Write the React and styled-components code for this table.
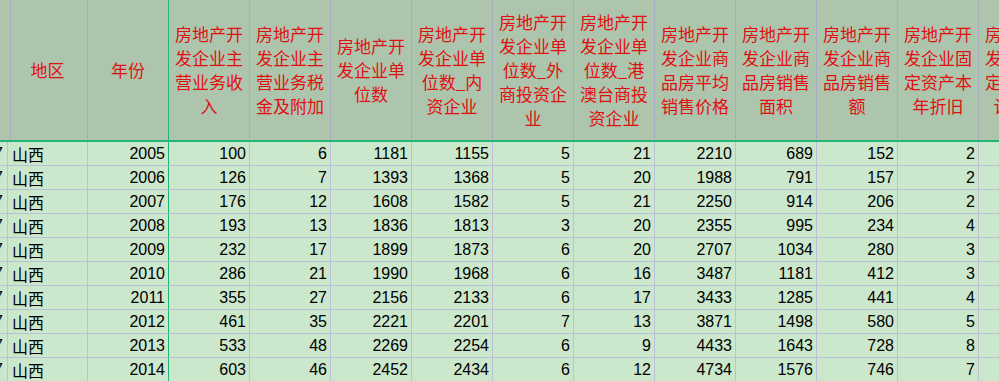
import React from 'react';
import styled, { createGlobalStyle } from 'styled-components';

const Global = createGlobalStyle`
  html, body {
    margin: 0;
    padding: 0;
    overflow: hidden;
    background: #cce8cc;
  }
`;

const COLS = '8px 80px 81px repeat(10, 81px) 81px';

const Sheet = styled.div`
  width: 1060px;
  font-family: "Liberation Sans", "Noto Sans CJK SC", sans-serif;
`;

const HeadRow = styled.div`
  display: grid;
  grid-template-columns: ${COLS};
  height: 142px;
  box-sizing: border-box;
  border-bottom: 2px solid #24b47a;
  background: #adc5ad;
`;

const HeadCell = styled.div`
  box-sizing: border-box;
  border-right: 1px solid ${(p) => (p.$frozen ? '#24b47a' : '#a7abc4')};
  display: flex;
  align-items: center;
  justify-content: center;
  text-align: center;
  padding: 0 5px;
  overflow: hidden;
  color: #e01010;
  font-family: "Noto Sans CJK SC", sans-serif;
  font-size: 17px;
  line-height: 24px;
`;

const Row = styled.div`
  display: grid;
  grid-template-columns: ${COLS};
  height: 24px;
`;

const Cell = styled.div`
  box-sizing: border-box;
  border-right: 1px solid ${(p) => (p.$frozen ? '#24b47a' : '#bcbfd6')};
  border-bottom: 1px solid #bcbfd6;
  display: flex;
  align-items: flex-end;
  justify-content: ${(p) => (p.$left ? 'flex-start' : 'flex-end')};
  padding: 0 3px 1px 4px;
  overflow: hidden;
  white-space: nowrap;
  color: #000;
  font-size: 16px;
  line-height: 20px;
  font-family: ${(p) =>
    p.$left ? '"Noto Sans CJK SC", sans-serif' : '"Liberation Sans", sans-serif'};
`;

// the scrolled-off column: only the tail of its value shows
const IndexCell = styled(Cell)`
  padding: 0 4px 1px 0;
`;

const headers = [
  '',
  '地区',
  '年份',
  '房地产开发企业主营业务收入',
  '房地产开发企业主营业务税金及附加',
  '房地产开发企业单位数',
  '房地产开发企业单位数_内资企业',
  '房地产开发企业单位数_外商投资企业',
  '房地产开发企业单位数_港澳台商投资企业',
  '房地产开发企业商品房平均销售价格',
  '房地产开发企业商品房销售面积',
  '房地产开发企业商品房销售额',
  '房地产开发企业固定资产本年折旧',
  '房地产开发企业固定资产累计折旧',
];

const rows = [
  [2005, 100, 6, 1181, 1155, 5, 21, 2210, 689, 152, 2],
  [2006, 126, 7, 1393, 1368, 5, 20, 1988, 791, 157, 2],
  [2007, 176, 12, 1608, 1582, 5, 21, 2250, 914, 206, 2],
  [2008, 193, 13, 1836, 1813, 3, 20, 2355, 995, 234, 4],
  [2009, 232, 17, 1899, 1873, 6, 20, 2707, 1034, 280, 3],
  [2010, 286, 21, 1990, 1968, 6, 16, 3487, 1181, 412, 3],
  [2011, 355, 27, 2156, 2133, 6, 17, 3433, 1285, 441, 4],
  [2012, 461, 35, 2221, 2201, 7, 13, 3871, 1498, 580, 5],
  [2013, 533, 48, 2269, 2254, 6, 9, 4433, 1643, 728, 8],
  [2014, 603, 46, 2452, 2434, 6, 12, 4734, 1576, 746, 7],
];

export default function App() {
  return (
    <>
      <Global />
      <Sheet>
        <HeadRow>
          {headers.map((h, i) => (
            <HeadCell key={i} $frozen={i === 2}>
              {h}
            </HeadCell>
          ))}
        </HeadRow>
        {rows.map((r) => (
          <Row key={r[0]}>
            <IndexCell>7</IndexCell>
            <Cell $left>山西</Cell>
            {r.map((v, i) => (
              <Cell key={i} $frozen={i === 0}>
                {v}
              </Cell>
            ))}
            <Cell />
          </Row>
        ))}
      </Sheet>
    </>
  );
}
